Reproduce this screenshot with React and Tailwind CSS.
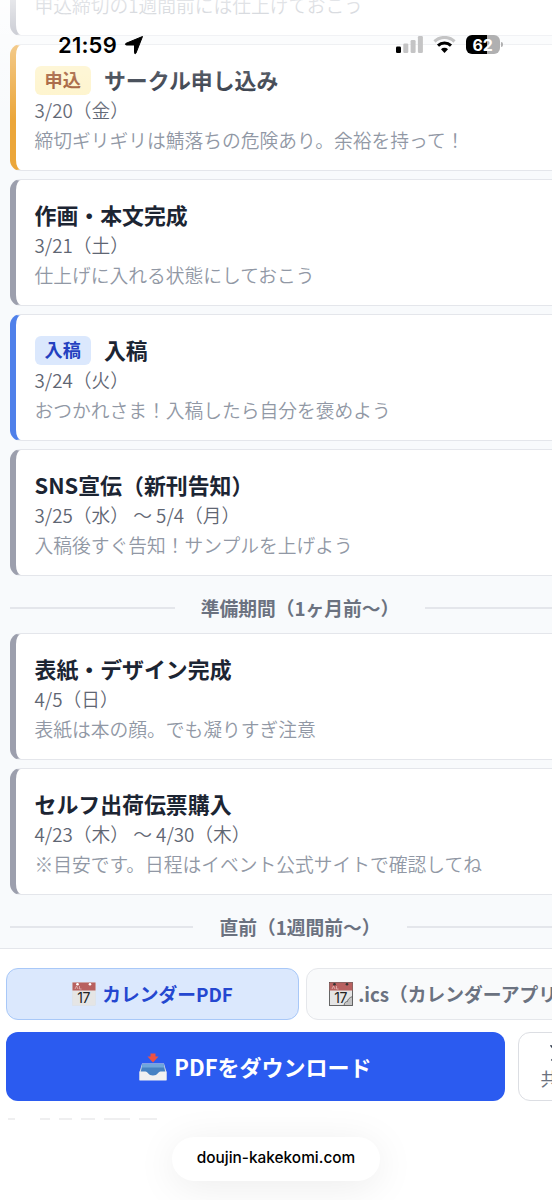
const tones = {
  orange: { border: "border-l-[#eba63a]", badge: "bg-[#fef3c7] text-[#984a20]" },
  blue: { border: "border-l-[#4f80ea]", badge: "bg-[#dbe8fd] text-[#2340c0]" },
  gray: { border: "border-l-[#9c9fad]", badge: "" },
};

const upcoming = [
  { title: "サークル申し込み", badge: "申込", tone: "orange", date: "3/20（金）", note: "締切ギリギリは鯖落ちの危険あり。余裕を持って！" },
  { title: "作画・本文完成", tone: "gray", date: "3/21（土）", note: "仕上げに入れる状態にしておこう" },
  { title: "入稿", badge: "入稿", tone: "blue", date: "3/24（火）", note: "おつかれさま！入稿したら自分を褒めよう" },
  { title: "SNS宣伝（新刊告知）", tone: "gray", date: "3/25（水） 〜 5/4（月）", note: "入稿後すぐ告知！サンプルを上げよう" },
];

const preparation = [
  { title: "表紙・デザイン完成", tone: "gray", date: "4/5（日）", note: "表紙は本の顔。でも凝りすぎ注意" },
  { title: "セルフ出荷伝票購入", tone: "gray", date: "4/23（木） 〜 4/30（木）", note: "※目安です。日程はイベント公式サイトで確認してね" },
];

function TaskCard({ task }) {
  const tone = tones[task.tone];
  return (
    <article
      className={
        "h-[127px] shrink-0 rounded-[11px] border-[1.4px] border-l-[6px] border-[#e4e6eb] bg-white pl-[18.5px] pt-[20px] " +
        tone.border
      }
    >
      <div className="flex h-[30px] items-center gap-[13px]">
        {task.badge && (
          <span
            className={
              "flex h-[29px] items-center rounded-md px-[10px] text-[18.2px] font-bold " +
              tone.badge
            }
          >
            {task.badge}
          </span>
        )}
        <h3 className="text-[21.9px] leading-[30px] font-bold text-[#1c2533]">{task.title}</h3>
      </div>
      <p className="text-[18.75px] leading-[30px] font-[350] text-[#5f6673]">{task.date}</p>
      <p className="text-[18.75px] leading-[29px] font-[350] text-[#9198a5]">{task.note}</p>
    </article>
  );
}

function Divider({ children }) {
  return (
    <div className="flex h-[57px] shrink-0 items-center gap-[26px] pt-[7px]">
      <span className="h-[1.4px] flex-1 bg-[#e4e6eb]" />
      <span className="text-[18.75px] leading-6 font-bold text-[#6b7280]">{children}</span>
      <span className="h-[1.4px] flex-1 bg-[#e4e6eb]" />
    </div>
  );
}

function CalendarIcon({ torn }) {
  return (
    <svg width="24" height="24" viewBox="0 0 24 24">
      <rect x="0.5" y="0.5" width="23" height="23" fill="#e5e5e5" stroke={torn ? "#444" : "#ddd"} strokeWidth={torn ? 0.8 : 0.4} />
      <path d="M0.5 0.5h23v8h-23z" fill="#b8605f" />
      <circle cx="5.5" cy="2.3" r="1.3" fill={torn ? "#333" : "#fff"} />
      <circle cx="18" cy="2.3" r="1.3" fill={torn ? "#333" : "#fff"} />
      <path d="M3 7l1.500-3 1.500 3M7.500 4v3h2" fill="none" stroke="#e6b9b8" strokeWidth="0.8" />
      {torn && <path d="M15 23.500c.5-3 1.500-4 3.500-4 0-2 2-4 5-5v9z" fill="#c4c4c4" stroke="#555" strokeWidth="0.8" />}
      <text x="11.500" y="21" textAnchor="middle" fontSize="14" fontFamily="Inter" fontWeight="400" letterSpacing="-0.5" fill="#222">
        17
      </text>
    </svg>
  );
}

function InboxIcon() {
  return (
    <svg width="28" height="28" viewBox="0 0 28 28">
      <path d="M3 10.500h22L27.500 19v8H0.500v-8z" fill="#d9dde2" />
      <path d="M3.500 11h21l1.800 8v5H1.700v-5z" fill="#4682c4" />
      <path d="M3.500 11h21l.8 3.500H2.700z" fill="#6fa6dc" />
      <path d="M0.500 18.500h6c2.500 0 2.500 4 7.500 4s5-4 7.500-4h6V27.500H0.500z" fill="#f1f1f1" />
      <path d="M11.500 0.500h5v3h3L14 9.500 8.500 3.500h3z" fill="#ed5145" />
    </svg>
  );
}

function StatusBar() {
  return (
    <div className="absolute inset-x-0 top-0 h-[120px] bg-linear-to-b from-white/75 via-white/35 via-45% to-white/0">
      <div className="flex items-center pl-[58px] pt-[31px] text-black">
        <span className="w-[62px] font-[Inter] text-[22px] leading-7 font-semibold tracking-[0.2px]">21:59</span>
        <svg className="ml-[4px]" width="20" height="20" viewBox="0 0 20 20">
          <path d="M18.500 1.500L12 18c-.4 1-1.500 1-1.500-.3V10H2.500c-1.300 0-1.500-1.200-.4-1.700z" fill="#000" stroke="#000" strokeLinejoin="round" />
        </svg>
        <svg className="absolute left-[396px] top-[36px]" width="27" height="18" viewBox="0 0 27 18">
          <rect y="10.500" width="5" height="6.500" rx="1.300" />
          <rect x="7.300" y="7.500" width="5" height="9.500" rx="1.300" fill="#c4c4c5" />
          <rect x="14.600" y="4" width="5" height="13" rx="1.300" fill="#c4c4c5" />
          <rect x="21.900" y="0" width="5" height="17" rx="1.300" fill="#c4c4c5" />
        </svg>
        <svg className="absolute left-[433px] top-[36px]" width="23" height="18" viewBox="0 0 23 18">
          <path d="M1.500 5.500a14.500 14.500 0 0 1 20 0" fill="none" stroke="#c4c4c5" strokeWidth="3.200" />
          <path d="M5 9.600a9.500 9.500 0 0 1 13 0" fill="none" stroke="#000" strokeWidth="3" />
          <path d="M11.500 17l-3.500-3.700a5 5 0 0 1 7 0z" />
        </svg>
        <div className="absolute left-[466px] top-[35px] flex h-[19px] w-[34px] items-center justify-center rounded-[6px] bg-linear-to-r from-black from-62% to-[#b0b0b1] to-62% pr-[1px] font-[Inter] text-[16px] font-bold tracking-[-0.3px] text-white">
          62
        </div>
        <span className="absolute left-[501px] top-[42px] h-[5px] w-[2px] rounded-r-full bg-[#b0b0b1]" />
      </div>
    </div>
  );
}

export default function App() {
  return (
    <div className="relative h-[1200px] w-[552px] overflow-hidden bg-[#f8fafc] font-['Noto_Sans_CJK_JP',sans-serif]">
      <main className="flex h-[948px] w-[605px] flex-col overflow-hidden pl-[10px] pr-[15px]">
        <div className="flex flex-col gap-2">
          <div className="h-[36px] rounded-b-[11px] border-[1.4px] border-t-0 border-l-[6px] border-[#e4e6eb] border-l-[#9c9fad] bg-white pl-[18.5px]">
            <p className="mt-[-9px] text-[18.75px] leading-[28px] font-[350] text-[#9198a5]">申込締切の1週間前には仕上げておこう</p>
          </div>
          {upcoming.map((task) => (
            <TaskCard key={task.title} task={task} />
          ))}
        </div>
        <Divider>準備期間（1ヶ月前〜）</Divider>
        <div className="flex flex-col gap-2">
          {preparation.map((task) => (
            <TaskCard key={task.title} task={task} />
          ))}
        </div>
        <Divider>直前（1週間前〜）</Divider>
      </main>

      <footer className="h-[252px] w-[605px] border-t-[1.4px] border-[#e4e6eb] bg-white pl-[6px] pr-[6px] pt-[19px]">
        <div className="flex gap-[7px]">
          <button className="flex h-[52px] flex-1 items-center justify-center gap-[6px] rounded-[12px] border-[1.4px] border-[#a8c8f8] bg-[#dbe8fd] text-[18.75px] font-bold text-[#2447d0]">
            <CalendarIcon />
            カレンダーPDF
          </button>
          <button className="flex h-[52px] flex-1 items-center justify-center gap-[5px] rounded-[12px] border-[1.4px] border-[#e5e7eb] bg-[#f9fafb] text-[18.75px] font-bold whitespace-nowrap text-[#6b7280]">
            <CalendarIcon torn />
            .ics（カレンダーアプリ）
          </button>
        </div>
        <div className="mt-[12px] flex gap-[13px]">
          <button className="flex h-[69px] w-[499px] items-center justify-center gap-[7px] rounded-[12px] bg-[#2b5bf0] text-[22px] font-bold text-white">
            <InboxIcon />
            PDFをダウンロード
          </button>
          <button className="flex h-[69px] flex-1 flex-col items-center justify-center gap-[5px] rounded-[12px] border-[1.4px] border-[#dcdee3] bg-white pt-[2px] text-[18px] leading-6 text-[#6b7280]">
            <svg width="17" height="16" viewBox="0 0 17 16" fill="none" stroke="#374151">
              <path d="M1.300 1h3.400l11 14h-3.400z" strokeWidth="1.600" />
              <path d="M15 0.500L9.500 6.700M7.200 9.300L1.500 15.500" strokeWidth="1.800" />
            </svg>
            共有
          </button>
        </div>
        <div className="mt-[17px] ml-[2px] flex h-[1.5px] gap-[9px] opacity-50">
          <span className="mr-[16px] w-[7px] bg-[#e0e0e2]" />
          <span className="w-[10px] bg-[#e0e0e2]" />
          <span className="w-[13px] bg-[#e0e0e2]" />
          <span className="w-[14px] bg-[#e0e0e2]" />
          <span className="w-[26px] bg-[#e0e0e2]" />
          <span className="w-[18px] bg-[#e0e0e2]" />
        </div>
      </footer>

      <StatusBar />
      <div className="absolute top-[1137px] left-[172px] flex h-[44px] w-[208px] items-center justify-center rounded-full bg-white pb-[2px] font-[Inter] text-[15.4px] font-medium text-black shadow-[0_6px_40px_rgba(0,0,0,0.08)]">
        doujin-kakekomi.com
      </div>
    </div>
  );
}
